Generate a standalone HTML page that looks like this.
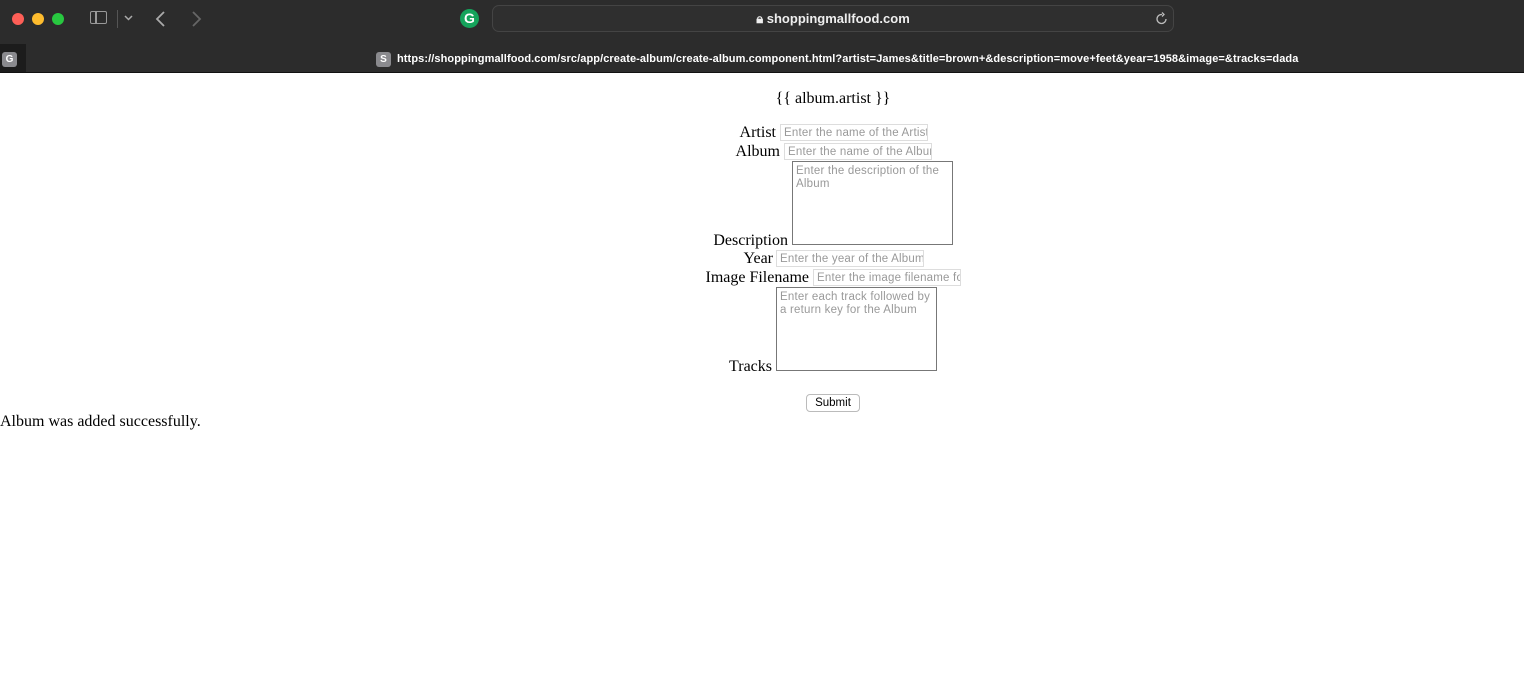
<!DOCTYPE html>
<html><head><meta charset="utf-8"><style>
body{margin:0;width:1524px;height:677px;position:relative;background:#fff;overflow:hidden;font-family:"Liberation Serif",serif;font-size:16px;color:#000}
.a{position:absolute}
.bar{left:0;top:0;width:1524px;height:73px;background:#2c2c2c}
.ln{left:0;top:72px;width:1524px;height:1px;background:#111}
.dot{width:12px;height:12px;border-radius:50%;top:13px}
.url{left:492px;top:5px;width:682px;height:27px;border:1px solid #444;border-radius:7px;background:#2f2f2f;box-sizing:border-box;color:#eee;font:bold 13px "Liberation Sans",sans-serif;text-align:center;line-height:26px}
.tab{font:bold 11px "Liberation Sans",sans-serif;color:#fff;letter-spacing:0.09px}
.inp{border:1px solid #ddd;height:17px;box-sizing:border-box;font:11.5px "Liberation Sans",sans-serif;color:#999;padding:1px 3px;overflow:hidden;white-space:nowrap;line-height:15px;background:#fff;letter-spacing:0.2px}
.ta{border:1px solid #777;box-sizing:border-box;font:11.5px "Liberation Sans",sans-serif;color:#999;padding:3px 3px;line-height:13px;letter-spacing:0.2px}
.lbl{white-space:nowrap;line-height:18px}
</style></head><body>
<div class="a bar"></div>
<div class="a ln"></div>
<div class="a" style="left:0;top:44px;width:26px;height:28px;background:#1c1c1c"></div>
<div class="a dot" style="left:12px;background:#fe5f57"></div>
<div class="a dot" style="left:32px;background:#febc2e"></div>
<div class="a dot" style="left:52px;background:#28c840"></div>
<div class="a" style="left:90px;top:11px;width:17px;height:13px;border:1.5px solid #999;border-radius:2px;box-sizing:border-box"></div>
<div class="a" style="left:95px;top:11px;width:1.5px;height:13px;background:#999"></div>
<div class="a" style="left:117px;top:10px;width:1px;height:18px;background:#555"></div>
<svg class="a" style="left:124px;top:15px" width="9" height="6"><path d="M1 1 L4.5 4.5 L8 1" stroke="#aaa" stroke-width="1.5" fill="none"/></svg>
<svg class="a" style="left:154px;top:10px" width="14" height="18"><path d="M10 2 L3 9 L10 16" stroke="#aaa" stroke-width="1.8" fill="none"/></svg>
<svg class="a" style="left:190px;top:10px" width="14" height="18"><path d="M3 2 L10 9 L3 16" stroke="#666" stroke-width="1.8" fill="none"/></svg>
<div class="a" style="left:460px;top:9px;width:19px;height:19px;border-radius:50%;background:#15a35b;color:#fff;font:bold 14px 'Liberation Sans',sans-serif;text-align:center;line-height:19px">G</div>
<div class="a url">🔒︎ shoppingmallfood.com</div>
<svg class="a" style="left:1155px;top:12px" width="14" height="14"><path d="M11 7 A4.5 4.5 0 1 1 7 2.5 M7 0.5 L9 2.5 L7 4.5" stroke="#bbb" stroke-width="1.3" fill="none"/></svg>
<div class="a" style="left:2px;top:52px;width:15px;height:15px;border-radius:3px;background:#8a8a8e;color:#fff;font:bold 10px 'Liberation Sans',sans-serif;text-align:center;line-height:15px">G</div>
<div class="a" style="left:376px;top:52px;width:15px;height:15px;border-radius:3px;background:#8a8a8e;color:#fff;font:bold 10px 'Liberation Sans',sans-serif;text-align:center;line-height:15px">S</div>
<div class="a tab" style="left:397px;top:53px">https://shoppingmallfood.com/src/app/create-album/create-album.component.html?artist=James&amp;title=brown+&amp;description=move+feet&amp;year=1958&amp;image=&amp;tracks=dada</div>

<div class="a lbl" style="left:0;width:1666px;text-align:center;top:90px">{{ album.artist }}</div>
<div class="a lbl" style="right:748px;top:124px">Artist</div>
<div class="a inp" style="left:780px;top:124px;width:148px">Enter the name of the Artist</div>
<div class="a lbl" style="right:744px;top:143px">Album</div>
<div class="a inp" style="left:784px;top:143px;width:148px">Enter the name of the Album</div>
<div class="a ta" style="left:792px;top:161px;width:161px;height:84px">Enter the description of the Album</div>
<div class="a lbl" style="right:736px;top:232px">Description</div>
<div class="a lbl" style="right:751px;top:250px">Year</div>
<div class="a inp" style="left:776px;top:250px;width:148px">Enter the year of the Album</div>
<div class="a lbl" style="right:715px;top:269px">Image Filename</div>
<div class="a inp" style="left:813px;top:269px;width:148px">Enter the image filename for</div>
<div class="a ta" style="left:776px;top:287px;width:161px;height:84px">Enter each track followed by a return key for the Album</div>
<div class="a lbl" style="right:752px;top:358px">Tracks</div>
<div class="a" style="left:806px;top:394px;width:54px;height:18px;border:1px solid #bbb;border-radius:4px;box-sizing:border-box;font:11.5px 'Liberation Sans',sans-serif;text-align:center;line-height:16px;background:#fff">Submit</div>
<div class="a lbl" style="left:0;top:413px">Album was added successfully.</div>
</body></html>
